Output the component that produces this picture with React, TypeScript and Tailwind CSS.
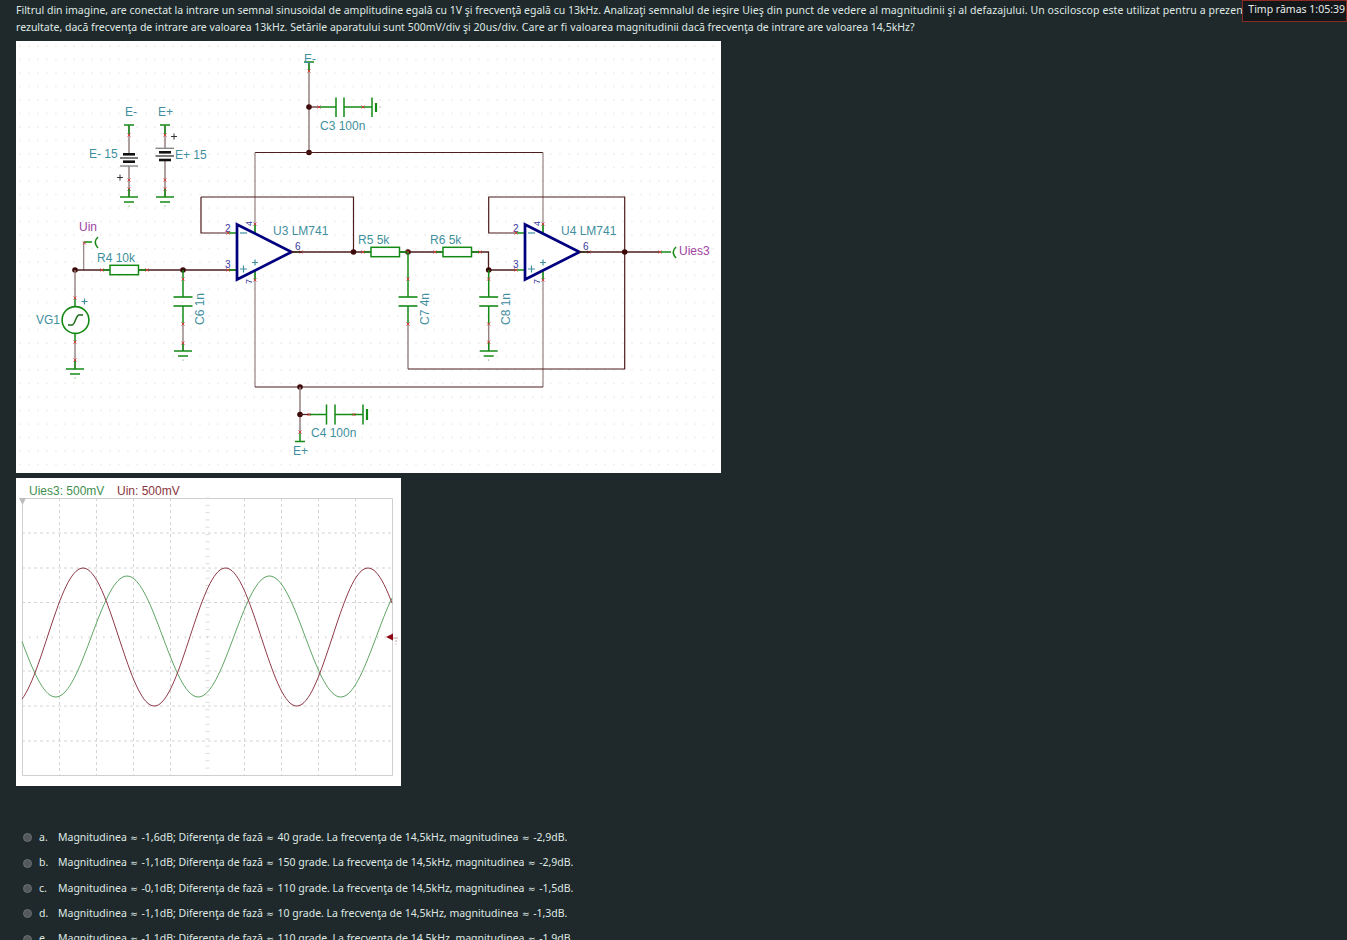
import React from "react";

const WIRE = "#958080";
const DARK = "#4d1c1c";
const GREEN = "#148a14";
const TEAL = "#3f8f9e";
const PIN = "#d23a3a";
const NAVY = "#00007f";

function X({ x, y }: { x: number; y: number }) {
  return <path d={`M${x - 1.5} ${y - 1.5}L${x + 1.5} ${y + 1.5}M${x + 1.5} ${y - 1.5}L${x - 1.5} ${y + 1.5}`} stroke={PIN} strokeWidth={0.9} fill="none" />;
}
function Dot({ x, y }: { x: number; y: number }) {
  return <circle cx={x} cy={y} r={2.8} fill="#3d0a0a" />;
}
function L({ d, c = WIRE, w = 1.2 }: { d: string; c?: string; w?: number }) {
  return <path d={d} stroke={c} strokeWidth={w} fill="none" />;
}
function T({ x, y, children, c = TEAL, s = 12, rot }: { x: number; y: number; children: React.ReactNode; c?: string; s?: number; rot?: boolean }) {
  return (
    <text x={x} y={y} fill={c} fontSize={s} fontFamily="'Liberation Sans', sans-serif" transform={rot ? `rotate(-90 ${x} ${y})` : undefined}>
      {children}
    </text>
  );
}
function GroundDown({ x, y }: { x: number; y: number }) {
  return (
    <g>
      <L d={`M${x - 9} ${y}H${x + 9}`} c={GREEN} w={1.5} />
      <L d={`M${x - 5} ${y + 5}H${x + 5}`} c={GREEN} w={1.5} />
      <circle cx={x} cy={y + 9} r={0.5} fill={GREEN} />
    </g>
  );
}
function CapV({ x, top, bottom }: { x: number; top: number; bottom: number }) {
  return (
    <g>
      <L d={`M${x} ${top}V297`} c={GREEN} w={1.5} />
      <L d={`M${x - 9.5} 297H${x + 9.5}`} c={GREEN} w={1.6} />
      <L d={`M${x - 9.5} 306H${x + 9.5}`} c={GREEN} w={1.6} />
      <L d={`M${x} 306V324`} c={GREEN} w={1.5} />
      <L d={`M${x} 324V${bottom}`} c={WIRE} w={1.4} />
      <X x={x} y={279} />
      <X x={x} y={324} />
    </g>
  );
}
function Resistor({ x, y }: { x: number; y: number }) {
  return (
    <g>
      <rect x={x} y={y - 4.7} width={28.5} height={9.4} fill="#fff" stroke={GREEN} strokeWidth={1.5} />
      <L d={`M${x - 8} ${y}H${x}M${x + 28.5} ${y}H${x + 37}`} c={GREEN} w={1.5} />
      <X x={x - 8} y={y} />
      <X x={x + 37} y={y} />
    </g>
  );
}
function OpAmp({ x, n }: { x: number; n: string }) {
  return (
    <g>
      <L d={`M${x - 9} 233H${x}M${x - 9} 270H${x}M${x + 18} 224V234M${x + 18} 270V280M${x + 55} 252H${x + 64}`} c={GREEN} w={1.5} />
      <path d={`M${x} 224.5L${x + 54.5} 252L${x} 279.5Z`} fill="#fff" stroke={NAVY} strokeWidth={2.7} strokeLinejoin="miter" />
      <L d={`M${x + 3} 233H${x + 10}`} c={TEAL} />
      <L d={`M${x + 3} 269H${x + 10}M${x + 6.5} 265.5V272.5`} c={TEAL} />
      <L d={`M${x + 15} 262.5H${x + 21}M${x + 18} 259.5V265.5`} c={TEAL} />
      <T x={x - 12} y={232} c="#3a3a9a" s={10}>2</T>
      <T x={x - 12} y={268} c="#3a3a9a" s={10}>3</T>
      <T x={x + 58} y={250} c="#3a3a9a" s={10}>6</T>
      <T x={x + 15} y={226} c="#3a3a9a" s={9} rot>4</T>
      <T x={x + 15} y={284} c="#3a3a9a" s={9} rot>7</T>
      <X x={x - 9} y={233} />
      <X x={x - 9} y={270} />
      <X x={x + 18} y={224} />
      <X x={x + 18} y={280} />
      <X x={x + 64} y={252} />
      <T x={x + 36} y={235}>{n} LM741</T>
    </g>
  );
}

function Schematic() {
  return (
    <svg viewBox="16 41 705 432" width={705} height={432} className="block bg-white">
      <defs>
        <pattern id="dots" x="16" y="41" width="9" height="13.5" patternUnits="userSpaceOnUse">
          <circle cx="4" cy="5" r="0.65" fill="#d6d9d6" />
        </pattern>
      </defs>
      <rect x="16" y="41" width="705" height="432" fill="url(#dots)" />

      {/* power rails */}
      <L d="M309 62V152.5" w={1.5} />
      <L d="M309 62V71" c={GREEN} w={1.5} />
      <L d="M304 62H314" c={GREEN} w={1.5} />
      <X x={309} y={71} />
      <T x={304} y={63}>E-</T>
      <Dot x={309} y={107} />
      <Dot x={309} y={152.5} />
      <L d="M309 107H319" c={DARK} />
      <L d="M319 107H336M336 97.5V117M344 97.5V117M344 107H372M372 97.5V117" c={GREEN} w={1.5} />
      <X x={319} y={107} />
      <L d="M376 103V112" c={GREEN} w={2.2} />
      <X x={363} y={107} />
      <circle cx={380} cy={107} r={0.5} fill={GREEN} />
      <T x={320} y={130}>C3 100n</T>

      <L d="M255 152.5H543" c={DARK} />
      <L d="M255 152.5V387M543 152.5V387" />
      <L d="M255 387H543" c={DARK} />
      <Dot x={300} y={387} />
      <L d="M300 387V432" w={1.5} />
      <L d="M300 432V441" c={GREEN} w={1.5} />
      <Dot x={300} y={414.5} />
      <L d="M300 414.5H309" c={DARK} />
      <L d="M309 414.5H326.5M326.5 404.5V424.5M335 404.5V424.5M335 414.5H363M363 404.5V424.5" c={GREEN} w={1.5} />
      <X x={309} y={414.5} />
      <L d="M367 409V420" c={GREEN} w={2.2} />
      <X x={354} y={414.5} />
      <T x={311} y={437}>C4 100n</T>
      <X x={300} y={432} />
      <L d="M295 441.5H305" c={GREEN} w={1.5} />
      <T x={293} y={455}>E+</T>

      {/* batteries */}
      <T x={125} y={116}>E-</T>
      <T x={158} y={116}>E+</T>
      <L d="M124 125H134M160 125H170" c={GREEN} w={1.5} />
      <L d="M129 125V155M165 125V148M129 166V197M165 160V197" w={1.5} />
      <L d="M129 125V134M165 125V134" c={GREEN} w={1.5} />
      <L d="M123 154.3H135" c="#111" w={2.6} />
      <L d="M120 158H138" c="#222" w={1.2} />
      <L d="M123 161.7H135" c="#111" w={2.6} />
      <L d="M120 166H138" c="#8a8a8a" w={1.4} />
      <L d="M155.5 148.3H174" c="#8a8a8a" w={1.4} />
      <L d="M159 152.3H171" c="#111" w={2.6} />
      <L d="M155.5 156H174" c="#222" w={1.2} />
      <L d="M159 160H171" c="#111" w={2.6} />
      <X x={129} y={135} />
      <X x={165} y={135} />
      <X x={129} y={180} />
      <X x={129} y={189} />
      <X x={165} y={180} />
      <X x={165} y={189} />
      <L d="M129 189V197M165 189V197" c={GREEN} w={1.5} />
      <L d="M117 177.5H123M120 174.5V180.5M171 136.5H177M174 133.5V139.5" c="#222" w={0.9} />
      <GroundDown x={129} y={197} />
      <GroundDown x={165} y={197} />
      <T x={89} y={158}>E- 15</T>
      <T x={175} y={159}>E+ 15</T>

      {/* input */}
      <T x={79} y={231} c="#a0439f">Uin</T>
      <L d="M83.7 270V242" />
      <L d="M83.7 242H92" c={GREEN} w={1.5} />
      <path d="M98 237Q92.5 242 98 248" stroke={GREEN} strokeWidth={1.6} fill="none" />
      <X x={84.5} y={243} />
      <L d="M75 270H110M138 270H237" c={DARK} w={1.3} />
      <Dot x={75} y={270} />
      <Dot x={183} y={270} />
      <Resistor x={110} y={270} />
      <T x={97} y={262}>R4 10k</T>
      <L d="M75 270V298" w={1.4} />
      <L d="M75 298V306.5M75 333.5V343" c={GREEN} w={1.5} />
      <L d="M75 343V369" w={1.4} />
      <L d="M75 360V369" c={GREEN} w={1.5} />
      <X x={75} y={298} />
      <X x={75} y={342} />
      <X x={75} y={360} />
      <circle cx={75.5} cy={320} r={13.4} fill="#fff" stroke={GREEN} strokeWidth={1.6} />
      <path d="M68 325H72C75 325 76 315 79 315H83" stroke="#1a6a1a" strokeWidth={1.5} fill="none" />
      <L d="M81.5 301.5H87.5M84.5 298.5V304.5" c={TEAL} />
      <T x={36} y={324}>VG1</T>
      <GroundDown x={75} y={369} />

      <CapV x={183} top={270} bottom={351} />
      <L d="M183 343V351" c={GREEN} w={1.5} />
      <X x={183} y={343} />
      <GroundDown x={183} y={351} />
      <T x={204} y={325} rot>C6 1n</T>

      {/* stage one */}
      <L d="M201 197H353.5V252M201 197V233H228" c={DARK} />
      <OpAmp x={237} n="U3" />
      <L d="M291 252H371M399.5 252H443M471.5 252H488.5V270H516" c={DARK} w={1.3} />
      <Dot x={353.5} y={252} />
      <Dot x={408} y={252} />
      <Dot x={488.7} y={270} />
      <Resistor x={371} y={252} />
      <Resistor x={443} y={252} />
      <T x={358} y={244}>R5 5k</T>
      <T x={430} y={244}>R6 5k</T>

      <CapV x={408} top={252} bottom={369} />
      <T x={429} y={325} rot>C7 4n</T>
      <CapV x={488.7} top={270} bottom={351} />
      <L d="M488.7 342V351" c={GREEN} w={1.5} />
      <X x={488.7} y={342} />
      <GroundDown x={488.7} y={351} />
      <T x={510} y={325} rot>C8 1n</T>
      <L d="M408 369H624.7V197H488.7V233H516" c={DARK} />

      {/* stage two */}
      <OpAmp x={525} n="U4" />
      <L d="M579 252H661" c={DARK} w={1.3} />
      <Dot x={624.7} y={252} />
      <L d="M661 252H671" c={GREEN} w={1.5} />
      <path d="M676 247Q670.5 252 676 258" stroke={GREEN} strokeWidth={1.6} fill="none" />
      <X x={660} y={252} />
      <T x={679} y={255} c="#a0439f">Uies3</T>
    </svg>
  );
}

function wave(phase: number, amp: number, mid: number) {
  const pts: string[] = [];
  for (let x = 22; x <= 392; x += 2) {
    const y = mid - amp * Math.cos((2 * Math.PI * (x - phase)) / 142.5);
    pts.push(`${x},${y.toFixed(1)}`);
  }
  return pts.join(" ");
}

function Scope() {
  const vs = [59.5, 96.5, 133.5, 170.5, 244.5, 281.5, 318.5, 355.5];
  const hs = [533, 568, 602.5, 671, 706, 741];
  const xt = Array.from({ length: 50 }, (_, i) => 22.5 + i * 7.4);
  const yt = Array.from({ length: 38 }, (_, i) => 498 + i * 7.3);
  return (
    <svg viewBox="16 478 385 308" width={385} height={308} className="block bg-white">
      <T x={29} y={495} c="#3f8f4f">Uies3: 500mV</T>
      <T x={117} y={495} c="#8a3540">Uin: 500mV</T>
      <path d="M22.5 498.5H392.5V775.5H22.5Z" fill="none" stroke="#cfcfcf" strokeWidth={1} />
      {vs.map((x) => (
        <path key={x} d={`M${x} 498V775`} stroke="#d4d4d4" strokeWidth={1} strokeDasharray="3 3" />
      ))}
      {hs.map((y) => (
        <path key={y} d={`M22 ${y}H392`} stroke="#d4d4d4" strokeWidth={1} strokeDasharray="3 3" />
      ))}
      {xt.map((x) => (
        <path key={x} d={`M${x} 636V638.5`} stroke="#d6d6d6" strokeWidth={1} />
      ))}
      {yt.map((y) => (
        <path key={y} d={`M205.5 ${y}H209.5`} stroke="#dcdcdc" strokeWidth={1} />
      ))}
      <path d="M19 498H26L22.5 505Z" fill="#bdbdbd" />
      <polyline points={wave(127, 60.5, 636.5)} fill="none" stroke="#5fa565" strokeWidth={1} />
      <polyline points={wave(83, 69, 637)} fill="none" stroke="#8f3a48" strokeWidth={1} />
      <path d="M386 637L393 633.5V640.5Z" fill="#8b0a16" />
      <path d="M393 638H398M395 641H397M395.5 644H396.5" stroke="#b08a8a" strokeWidth={0.8} fill="none" />
    </svg>
  );
}

function Approx() {
  return <span className="inline-block w-[9.2px] text-center font-['DejaVu_Sans',sans-serif] text-[9px]">≈</span>;
}

const options = [
  ["a.", "-1,6dB; Diferenţa de fază ", "40 grade. La frecvenţa de 14,5kHz, magnitudinea ", "-2,9dB."],
  ["b.", "-1,1dB; Diferenţa de fază ", "150 grade. La frecvenţa de 14,5kHz, magnitudinea ", "-2,9dB."],
  ["c.", "-0,1dB; Diferenţa de fază ", "110 grade. La frecvenţa de 14,5kHz, magnitudinea ", "-1,5dB."],
  ["d.", "-1,1dB; Diferenţa de fază ", "10 grade. La frecvenţa de 14,5kHz, magnitudinea ", "-1,3dB."],
  ["e.", "-1,1dB; Diferenţa de fază ", "110 grade. La frecvenţa de 14,5kHz, magnitudinea ", "-1,9dB."],
];

export default function App() {
  return (
    <div className="relative h-[940px] overflow-hidden bg-[#1f282b] font-['Noto_Sans',sans-serif] text-[10.5px] text-[#dfe8e4]">
      <div className="absolute right-0 top-0 flex h-[22px] w-[105px] items-center justify-end border border-[#8a2a22] bg-[#14171a] pb-[3px] pr-[1px] text-[#e6ecea]">
        Timp rămas 1:05:39
      </div>
      <div className="pl-4 pr-[60px] pt-[2px] leading-[17px]">
        Filtrul din imagine, are conectat la intrare un semnal sinusoidal de amplitudine egală cu 1V şi frecvenţă egală cu 13kHz. Analizaţi{" "}
        <span className="tracking-[0.09px]">semnalul de ieşire Uieş din punct de vedere al magnitudinii şi al defazajului. Un osciloscop este utilizat pentru a prezenta</span> rezultate, dacă frecvenţa de intrare are valoarea 13kHz. Setările aparatului sunt 500mV/div şi{" "}
        <span className="tracking-[0.12px]">20us/div. Care ar fi valoarea</span> magnitudinii dacă frecvenţa de intrare are valoarea 14,5kHz?
      </div>
      <div className="ml-4 mt-[5px]">
        <Schematic />
      </div>
      <div className="ml-4 mt-[5px]">
        <Scope />
      </div>
      <div className="ml-[23px] mt-[39px] flex flex-col">
        {options.map(([k, a, b, c]) => (
          <div key={k} className="flex h-[25.4px] items-center">
            <span className="h-[9px] w-[9px] rounded-full border border-[#6b7173] bg-[#53585a]" />
            <span className="ml-[7px] w-[19px]">{k}</span>
            <span>
              Magnitudinea <Approx /> {a}
              <Approx /> {b}
              <Approx /> {c}
            </span>
          </div>
        ))}
      </div>
    </div>
  );
}
